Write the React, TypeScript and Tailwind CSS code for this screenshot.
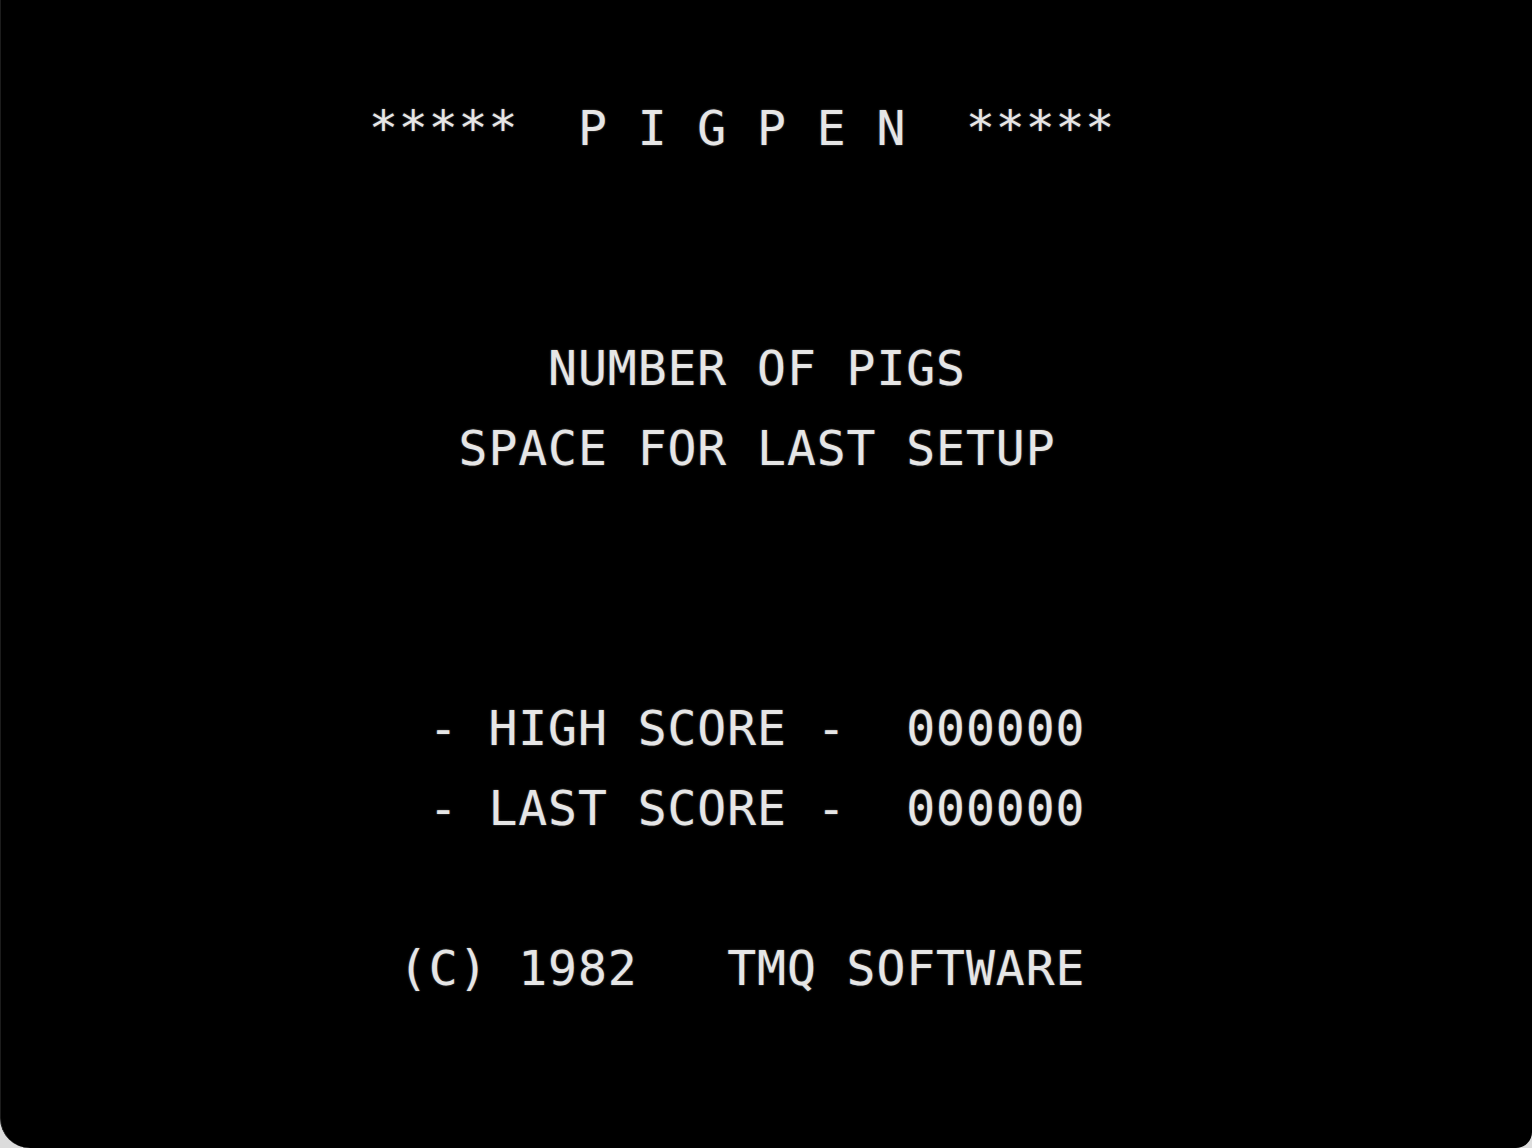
import React from 'react';

// 40x24 text screen, one string per row; leading spaces set the column
const rows: string[] = [
  '*****  P I G P E N  *****',
  '',
  '',
  '',
  '',
  '',
  '      NUMBER OF PIGS',
  '',
  '   SPACE FOR LAST SETUP',
  '',
  '',
  '',
  '',
  '',
  '',
  '  - HIGH SCORE -  000000',
  '',
  '  - LAST SCORE -  000000',
  '',
  '',
  '',
  ' (C) 1982   TMQ SOFTWARE',
];

const App = () => {
  return (
    <div className="w-[1532px] h-[1148px] bg-[#dcdcdc] overflow-hidden">
      <div className="w-full h-full bg-black border-l border-[#1c1c1c] rounded-bl-[30px] rounded-br-[16px] pt-[108px] pl-[368px]">
        <div className="font-['DejaVu_Sans_Mono',monospace] text-[48px] leading-[40px] tracking-[0.95px] text-[#e6e6e6] [text-shadow:0_0_2px_rgba(255,255,255,0.4)]">
          {rows.map((line, i) => (
            <div key={i} className="h-[40px] whitespace-pre">
              {line}
            </div>
          ))}
        </div>
      </div>
    </div>
  );
};

export default App;
